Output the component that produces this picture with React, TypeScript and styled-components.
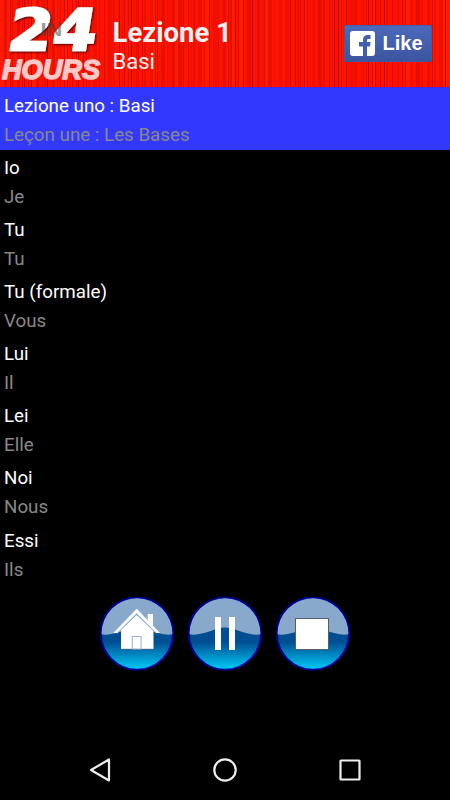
import React from "react";
import styled, { createGlobalStyle } from "styled-components";

const Global = createGlobalStyle`
  html, body { margin: 0; background: #000; }
  body { font-family: Roboto, "Liberation Sans", sans-serif; }
`;

// Irregular vertical grooves of the red curtain, as hard-edged gradient stops.
const grooves = (() => {
  const shades = ["#ff1200", "#f01000", "#ff1400", "#d00d00", "#ff1200", "#e60f00", "#ff1a04", "#dc0e00", "#fa1100", "#b80b00"];
  const stops: string[] = [];
  let x = 0;
  let seed = 17;
  while (x < 450) {
    seed = (seed * 1103 + 12345) % 65536;
    const shade = shades[seed % shades.length];
    const dark = shade === "#b80b00" || shade === "#d00d00" || shade === "#dc0e00";
    const w = dark ? 1 : 1 + ((seed >> 5) % 4);
    stops.push(`${shade} ${x}px ${x + w}px`);
    x += w;
  }
  return `linear-gradient(90deg, ${stops.join(", ")})`;
})();

const Screen = styled.div`
  width: 450px;
  height: 800px;
  background: #000;
  display: flex;
  flex-direction: column;
  overflow: hidden;
`;

const Header = styled.header`
  box-sizing: border-box;
  height: 88px;
  flex: none;
  display: flex;
  align-items: flex-start;
  border-bottom: 1px solid #4a2ae0;
  background: ${grooves};
`;

const Logo = styled.svg`
  width: 104px;
  height: 87px;
  flex: none;
  display: block;
`;

const Heading = styled.div`
  margin: 17px 0 0 8.5px;
  width: 231.5px;
  flex: none;
  color: #f4f0f0;
`;

const Title = styled.h1`
  margin: 0;
  font-size: 27.5px;
  line-height: 31px;
  font-weight: 700;
`;

const Subtitle = styled.div`
  font-size: 22px;
  line-height: 27px;
`;

const LikeButton = styled.button`
  box-sizing: border-box;
  margin: 25px 0 0 -0.5px;
  width: 88.5px;
  height: 37px;
  padding: 0 0 0 5px;
  border: 1px solid #3e5cae;
  border-radius: 2px;
  background: linear-gradient(#4c69ba, #3b55a0);
  display: flex;
  align-items: center;
  gap: 8px;
  color: #fff;
  font: bold 20px "Liberation Sans", sans-serif;
  svg { flex: none; }
`;

const List = styled.ul`
  margin: 0;
  padding: 0;
  list-style: none;
  height: 498px;
  flex: none;
`;

const Phrase = styled.li<{ $active: boolean }>`
  box-sizing: border-box;
  height: 62.15px;
  padding: 3.6px 4px 0;
  background: ${(p) => (p.$active ? "#3338ff" : "transparent")};
  font-size: 18.75px;
  line-height: 29px;
`;

const Source = styled.div`
  color: #fff;
`;

const Translation = styled.div`
  color: #888;
`;

const Controls = styled.div`
  height: 76px;
  margin-top: 10px;
  flex: none;
  display: flex;
  justify-content: center;
  gap: 12px;
`;

const RoundButton = styled.button`
  width: 76px;
  height: 76px;
  padding: 0;
  border: 0;
  background: none;
  svg { display: block; }
`;

const NavBar = styled.nav`
  margin-top: auto;
  height: 60px;
  flex: none;
  display: flex;
  justify-content: center;
  gap: 85px;
  align-items: center;
`;

const phrases = [
  ["Lezione uno : Basi", "Leçon une : Les Bases"],
  ["Io", "Je"],
  ["Tu", "Tu"],
  ["Tu (formale)", "Vous"],
  ["Lui", "Il"],
  ["Lei", "Elle"],
  ["Noi", "Nous"],
  ["Essi", "Ils"],
];

function Glossy({ id, label, children }: { id: string; label: string; children: React.ReactNode }) {
  return (
    <RoundButton aria-label={label}>
      <svg width="76" height="76" viewBox="0 0 76 76">
        <defs>
          <linearGradient id={id} x1="0" y1="0" x2="0" y2="1">
            <stop offset="0" stopColor="#004684" />
            <stop offset=".62" stopColor="#004f94" />
            <stop offset="1" stopColor="#00ccf6" />
          </linearGradient>
          <clipPath id={`${id}-clip`}><circle cx="38" cy="37.6" r="35.4" /></clipPath>
        </defs>
        <circle cx="38" cy="37.6" r="36.1" fill={`url(#${id})`} stroke="#00009a" strokeWidth="2" />
        <path clipPath={`url(#${id}-clip)`} d="M2 0H74V38C68 40 58 37 51 34.500C42 30.500 34 30.500 25 34.500C18 37 8 40 2 38Z" fill="#88a9cc" />
        {children}
      </svg>
    </RoundButton>
  );
}

export default function App() {
  return (
    <>
      <Global />
      <Screen>
        <Header>
          <Logo viewBox="0 0 104 87">
            <defs>
              <filter id="shade" x="-20%" y="-20%" width="140%" height="140%">
                <feDropShadow dx="1" dy="1" stdDeviation="1.3" floodColor="#300" floodOpacity=".9" />
              </filter>
            </defs>
            <g filter="url(#shade)">
              <text transform="translate(0 49.500) skewX(-9) scale(1.1 1)" x="5.500 46" y="0" fontSize="57" fontFamily="DejaVu Sans" fontWeight="700" fill="#fff" stroke="#fff" strokeWidth="2.6">24</text>
            </g>
            <text x="40.500" y="36" fontSize="18" fontFamily="Liberation Sans" fontWeight="700" fill="#444" fillOpacity=".55" textLength="22" lengthAdjust="spacingAndGlyphs">IN</text>
            <text x="2" y="78.500" fontSize="27" fontFamily="Liberation Sans" fontWeight="700" fontStyle="italic" fill="#ffc8c8" stroke="#ffc8c8" strokeWidth="1.5" textLength="98" lengthAdjust="spacingAndGlyphs">HOURS</text>
          </Logo>
          <Heading>
            <Title>Lezione 1</Title>
            <Subtitle>Basi</Subtitle>
          </Heading>
          <LikeButton>
            <svg width="25" height="25" viewBox="0 0 25 25">
              <rect width="25" height="25" rx="3" fill="#fff" />
              <path d="M13 25V15.500H9V11H13V9C13 5.500 15 4 18 4H20.500V8H18.500C17.300 8 17 8.600 17 9.500V11H20.500L20 15.500H17V25Z" fill="#425fae" />
            </svg>
            Like
          </LikeButton>
        </Header>
        <List>
          {phrases.map(([a, b], i) => (
            <Phrase key={i} $active={i === 0}>
              <Source>{a}</Source>
              <Translation>{b}</Translation>
            </Phrase>
          ))}
        </List>
        <Controls>
          <Glossy id="home" label="Home">
            <path d="M22 33L37.700 18L54.500 33V53.300H22Z" fill="#fff" />
            <path d="M22 53.300H54.500" stroke="#24507a" strokeWidth=".8" />
            <path d="M48.700 18H54V33L48.700 28Z" fill="#fff" />
            <path d="M17.500 37L37.700 17.800L58 37" fill="none" stroke="#88a9cc" strokeWidth="1.8" />
            <path d="M14.300 37L37.700 12.800L61 37H57.500L37.700 17.200L18 37Z" fill="#fff" />
            <rect x="33.300" y="40.500" width="8.800" height="12.500" fill="#fff" stroke="#9bb2d0" />
          </Glossy>
          <Glossy id="pause" label="Pause">
            <path d="M28 21H34V54H28ZM42 21H48V54H42Z" fill="#fff" />
          </Glossy>
          <Glossy id="stop" label="Stop">
            <rect x="20.500" y="22.500" width="33" height="31" fill="#fff" stroke="#555d68" />
          </Glossy>
        </Controls>
        <NavBar>
          <svg width="40" height="40" viewBox="0 0 40 40"><path d="M11 20L29 9.500V30.500Z" fill="none" stroke="#eee" strokeWidth="2.200" strokeLinejoin="round" /></svg>
          <svg width="40" height="40" viewBox="0 0 40 40"><circle cx="20" cy="20" r="10.700" fill="none" stroke="#eee" strokeWidth="2.200" /></svg>
          <svg width="40" height="40" viewBox="0 0 40 40"><rect x="10.500" y="10.500" width="19" height="19" rx=".5" fill="none" stroke="#eee" strokeWidth="2.200" /></svg>
        </NavBar>
      </Screen>
    </>
  );
}
